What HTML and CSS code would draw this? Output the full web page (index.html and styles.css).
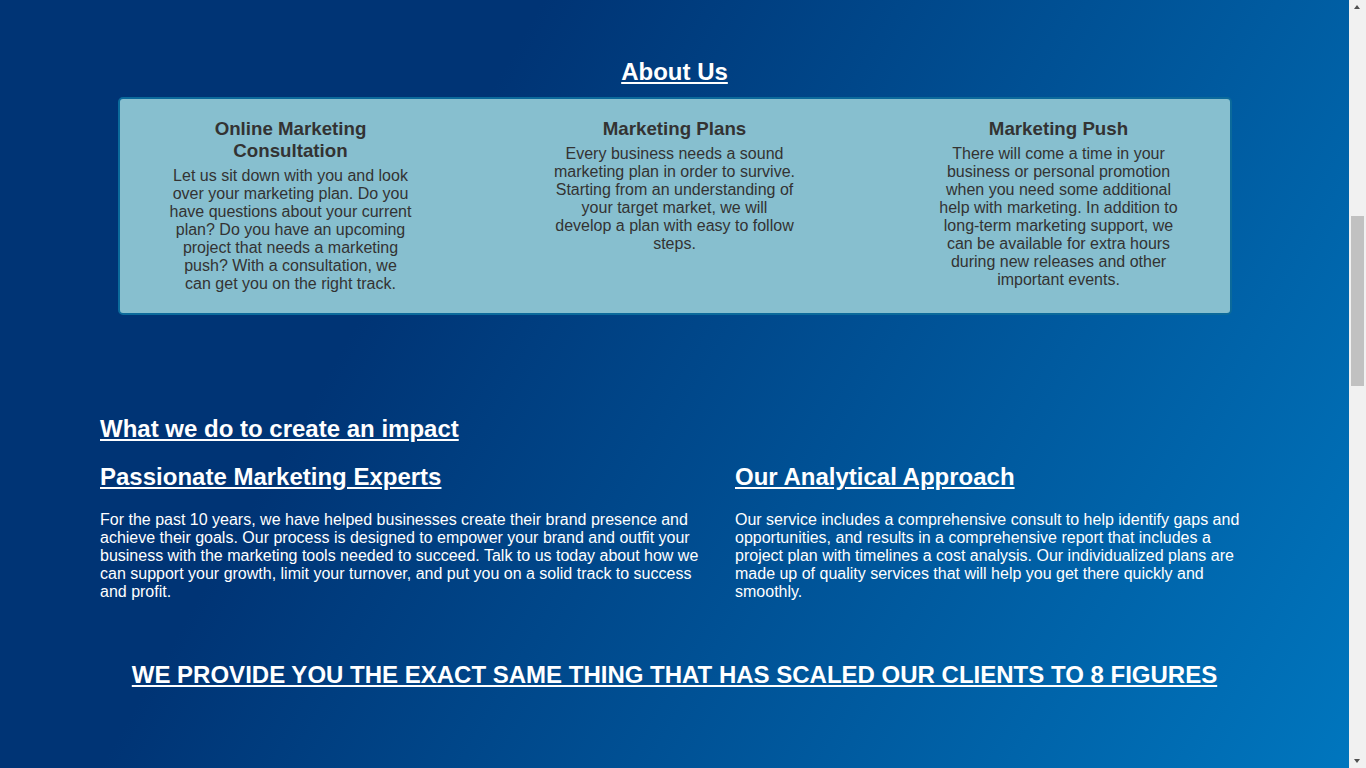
FILE: index.html
```html
<!DOCTYPE html>
<html lang="en">
<head>
<meta charset="utf-8">
<title>About Us</title>
<link rel="stylesheet" href="styles.css">
</head>
<body>
<main class="page">
  <section class="about">
    <h2 class="section-title center">About Us</h2>
    <div class="about-box">
      <div class="about-item">
        <h3 class="item-title">Online Marketing Consultation</h3>
        <p class="item-text">Let us sit down with you and look over your marketing plan. Do you have questions about your current plan? Do you have an upcoming project that needs a marketing push? With a consultation, we<br>can get you on the right track.</p>
      </div>
      <div class="about-item">
        <h3 class="item-title">Marketing Plans</h3>
        <p class="item-text">Every business needs a sound marketing plan in order to survive. Starting from an understanding of your target market, we will develop a plan with easy to follow steps.</p>
      </div>
      <div class="about-item">
        <h3 class="item-title">Marketing Push</h3>
        <p class="item-text">There will come a time in your business or personal promotion when you need some additional help with marketing. In addition to long-term marketing support, we can be available for extra hours during new releases and other important events.</p>
      </div>
    </div>
  </section>

  <section class="impact">
    <h2 class="section-title">What we do to create an impact</h2>
    <div class="impact-grid">
      <div class="impact-col">
        <h2 class="section-title">Passionate Marketing Experts</h2>
        <p class="impact-text">For the past 10 years, we have helped businesses create their brand presence and achieve their goals. Our process is designed to empower your brand and outfit your business with the marketing tools needed to succeed. Talk to us today about how we can support your growth, limit your turnover, and put you on a solid track to success and profit.</p>
      </div>
      <div class="impact-col">
        <h2 class="section-title">Our Analytical Approach</h2>
        <p class="impact-text">Our service includes a comprehensive consult to help identify gaps and opportunities, and results in a comprehensive report that includes a project plan with timelines a cost analysis. Our individualized plans are made up of quality services that will help you get there quickly and smoothly.</p>
      </div>
    </div>
  </section>

  <section class="scale">
    <h2 class="section-title center">WE PROVIDE YOU THE EXACT SAME THING THAT HAS SCALED OUR CLIENTS TO 8 FIGURES</h2>
  </section>
</main>

<div class="scrollbar" aria-hidden="true">
  <span class="scroll-arrow up"></span>
  <span class="scroll-thumb"></span>
  <span class="scroll-arrow down"></span>
</div>
</body>
</html>
```

FILE: styles.css
```css
html {
  min-height: 100%;
  background: linear-gradient(120deg, #003475 30%, #0077bf 100%);
  background-attachment: fixed;
}

body {
  margin: 0 17px 0 0;
  font-family: "Liberation Sans", Arial, sans-serif;
  color: #ffffff;
}

.page {
  padding-top: 58px;
  padding-bottom: 60px;
}

.section-title {
  font-size: 24px;
  font-weight: bold;
  color: #ffffff;
  text-decoration: underline;
  margin: 20px 0;
}

.center {
  text-align: center;
}

.about .section-title {
  margin: 0 0 11px;
}

.about-box {
  width: 1114px;
  box-sizing: border-box;
  margin: 0 auto;
  display: flex;
  justify-content: space-between;
  background: #87bfcf;
  border: 2px solid #0b6a9b;
  border-radius: 5px;
}

.about-item {
  width: 342px;
  box-sizing: border-box;
  padding: 0 49px;
  text-align: center;
  color: #333333;
}

.item-title {
  font-size: 18.72px;
  font-weight: bold;
  margin: 19px 0 5px;
}

.item-text {
  font-size: 16px;
  margin: 0 0 20px;
}

.impact {
  padding: 0 100px;
  margin-top: 100px;
}

.impact > .section-title {
  margin-top: 0;
}

.impact-grid {
  display: grid;
  grid-template-columns: 610px 1fr;
  column-gap: 25px;
}

.impact-col > .section-title {
  margin-top: 0;
}

.impact-text {
  font-size: 16px;
  margin: 16px 0;
}

.scale {
  margin-top: 44px;
}

.scale .section-title {
  margin: 0;
}

/* browser scrollbar as seen in the capture */
.scrollbar {
  position: fixed;
  top: 0;
  right: 0;
  width: 17px;
  height: 100vh;
  background: #f1f1f1;
}

.scroll-thumb {
  position: absolute;
  left: 2px;
  right: 2px;
  top: 216px;
  height: 170px;
  background: #c1c1c1;
}

.scroll-arrow {
  position: absolute;
  left: 5px;
  width: 0;
  height: 0;
  border-left: 3.5px solid transparent;
  border-right: 3.5px solid transparent;
}

.scroll-arrow.up {
  top: 5px;
  border-bottom: 4px solid #505050;
}

.scroll-arrow.down {
  bottom: 5px;
  border-top: 4px solid #505050;
}
```
